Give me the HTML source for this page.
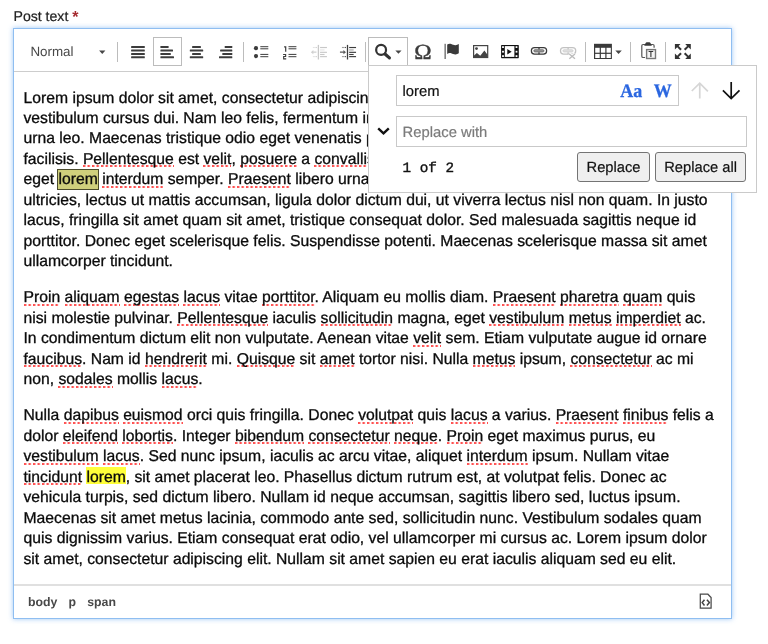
<!DOCTYPE html>
<html lang="en">
<head>
<meta charset="utf-8">
<title>Post text editor</title>
<style>
*{box-sizing:border-box;margin:0;padding:0}
html,body{width:768px;height:644px;background:#fff;overflow:hidden}
#root{position:absolute;left:0;top:0;width:768px;height:644px;will-change:transform;transform:translateZ(0)}
body{position:relative;font-family:"Liberation Sans",Arial,sans-serif;color:#111;text-rendering:geometricPrecision;-webkit-font-smoothing:antialiased}
.abs{position:absolute}
#label{left:13.500px;top:8px;font-size:14.100px;line-height:16px;color:#222;white-space:nowrap;-webkit-text-stroke:.2px #222}
#label b{font-weight:bold;font-size:16px;color:#a52a2f;-webkit-text-stroke:0;position:relative;top:.5px}
#editor{left:13px;top:28px;width:719px;height:591px;border:1px solid #8fbef1;background:#fff;box-shadow:0 0 5px 0 rgba(125,180,242,.75)}
#tbline{left:14px;top:70.800px;width:717px;height:1.200px;background:#cdcdcd}
#btline{left:14px;top:584.200px;width:717px;height:1.500px;background:#e0e0e0}
#content{z-index:0;left:23.5px;top:88.5px;font-size:15.73px;line-height:20.45px;color:#0b0b0b;white-space:nowrap;-webkit-text-stroke:0.3px #0b0b0b}
#content p{margin:0 0 15.8px 0}
.s{padding-bottom:1px;background-image:linear-gradient(to right,#ff5050 0,#ff5050 2.1px,rgba(255,80,80,0) 2.5px);background-size:4.5px 2px;background-repeat:repeat-x;background-position:0 14.6px}
.hl1,.hl2{position:relative}
.hl1::before{content:"";position:absolute;left:-1px;right:-1px;top:-2px;height:18.200px;background:#cfcf7c;border:1px solid #4b4b2c;z-index:-1}
.hl2::before{content:"";position:absolute;left:0;right:0;top:-1.900px;height:17.300px;background:#ffff3a;z-index:-1}
#path{left:28px;top:595px;font-size:12.300px;line-height:14px;font-weight:bold;color:#484848;white-space:nowrap}
#path span{margin-right:11.200px}
.sep{width:1px;height:20px;top:41.5px;background:#bcbcbc}
.ico{width:16px;height:16px}
.ico svg{display:block;width:100%;height:100%;overflow:visible}
#combo{left:30.400px;top:44px;font-size:13.400px;line-height:16px;color:#484848}
.caret{width:0;height:0;border-left:3.2px solid transparent;border-right:3.2px solid transparent;border-top:3.3px solid #484848}
#alignbox{left:153px;top:37px;width:29px;height:28.5px;border:1px solid #bcbcbc;background:#fff}
#findbtn{left:368px;top:37px;width:39.6px;height:30px;border:1px solid #bcbcbc;border-bottom:none;background:#fff}
#panel{left:368px;top:65px;width:388.6px;height:128px;border:1px solid #cacaca;background:#fff}
.inp{border:1px solid #c9c9c9;background:#fff;font-size:14.800px;line-height:18px;color:#111;white-space:nowrap;-webkit-text-stroke:.2px currentColor}
#in1{left:396.3px;top:74.6px;width:282.6px;height:31.3px;padding:7.400px 0 0 5.200px}
#in2{left:396.3px;top:116px;width:350.3px;height:30.5px;padding:7px 0 0 5.300px;color:#7b7b7b}
.serif{font-family:"Liberation Serif","Times New Roman",serif;font-weight:bold;color:#2a63db;font-size:17px;line-height:20px}
#count{left:402.6px;top:159.500px;font-family:"Liberation Mono",monospace;font-size:14.300px;line-height:18px;color:#111;white-space:pre;-webkit-text-stroke:.350px #111}
.btn{top:151.8px;height:30.4px;border:1px solid #747474;border-radius:3px;background:#efefef;font-size:14.7px;line-height:18px;color:#111;text-align:center;padding-top:6.600px;white-space:nowrap;-webkit-text-stroke:.2px #111}
</style>
</head>
<body>
<div id="root">
<div id="label" class="abs">Post text <b>*</b></div>
<div id="editor" class="abs"></div>
<div id="tbline" class="abs"></div>
<div id="btline" class="abs"></div>

<div id="content" class="abs">
<p>Lorem ipsum dolor sit amet, consectetur adipiscing elit. Etiam vel<br>vestibulum cursus dui. Nam leo felis, fermentum in mauris ut,<br>urna leo. Maecenas tristique odio eget venenatis porta. Cras<br>facilisis. <span class="s">Pellentesque</span> est <span class="s">velit</span>, <span class="s">posuere</span> a <span class="s">convallis</span> ut, tempus<br>eget <span class="hl1">lorem</span> <span class="s">interdum</span> semper. <span class="s">Praesent</span> libero urna, dictum<br>ultricies, lectus ut mattis accumsan, ligula dolor dictum dui, ut viverra lectus nisl non quam. In justo<br>lacus, fringilla sit amet quam sit amet, tristique consequat dolor. Sed malesuada sagittis neque id<br>porttitor. Donec eget scelerisque felis. Suspendisse potenti. Maecenas scelerisque massa sit amet<br>ullamcorper tincidunt.</p>
<p><span class="s">Proin</span> <span class="s">aliquam</span> <span class="s">egestas</span> <span class="s">lacus</span> vitae <span class="s">porttitor</span>. Aliquam eu mollis diam. <span class="s">Praesent</span> <span class="s">pharetra</span> <span class="s">quam</span> quis<br>nisi molestie pulvinar. <span class="s">Pellentesque</span> iaculis <span class="s">sollicitudin</span> magna, eget <span class="s">vestibulum</span> <span class="s">metus</span> <span class="s">imperdiet</span> ac.<br>In condimentum dictum elit non vulputate. Aenean vitae <span class="s">velit</span> sem. Etiam vulputate augue id ornare<br><span class="s">faucibus</span>. Nam id <span class="s">hendrerit</span> mi. <span class="s">Quisque</span> sit <span class="s">amet</span> tortor nisi. Nulla <span class="s">metus</span> ipsum, <span class="s">consectetur</span> ac mi<br>non, <span class="s">sodales</span> mollis <span class="s">lacus</span>.</p>
<p>Nulla <span class="s">dapibus</span> <span class="s">euismod</span> orci quis fringilla. Donec <span class="s">volutpat</span> quis <span class="s">lacus</span> a varius. <span class="s">Praesent</span> <span class="s">finibus</span> felis a<br>dolor <span class="s">eleifend</span> <span class="s">lobortis</span>. Integer <span class="s">bibendum</span> <span class="s">consectetur</span> <span class="s">neque</span>. <span class="s">Proin</span> eget maximus purus, eu<br><span class="s">vestibulum</span> <span class="s">lacus</span>. Sed nunc ipsum, iaculis ac arcu vitae, aliquet <span class="s">interdum</span> ipsum. Nullam vitae<br><span class="s">tincidunt</span> <span class="hl2">lorem</span>, sit amet placerat leo. Phasellus dictum rutrum est, at volutpat felis. Donec ac<br>vehicula turpis, sed dictum libero. Nullam id neque accumsan, sagittis libero sed, luctus ipsum.<br>Maecenas sit amet metus lacinia, commodo ante sed, sollicitudin nunc. Vestibulum sodales quam<br>quis dignissim varius. Etiam consequat erat odio, vel ullamcorper mi cursus ac. Lorem ipsum dolor<br>sit amet, consectetur adipiscing elit. Nullam sit amet sapien eu erat iaculis aliquam sed eu elit.</p>
</div>

<div id="path" class="abs"><span>body</span><span>p</span><span>span</span></div>

<!-- TOOLBAR -->
<div id="combo" class="abs">Normal</div>
<div class="abs sep" style="left:117px"></div>
<div id="alignbox" class="abs"></div>
<div class="abs sep" style="left:242.6px"></div>
<div class="abs sep" style="left:364.6px"></div>
<div class="abs sep" style="left:585.3px"></div>
<div class="abs sep" style="left:630.2px"></div>
<div class="abs sep" style="left:665px"></div>

<!-- FIND PANEL -->
<div id="findbtn" class="abs"></div>
<div id="panel" class="abs"></div>
<div id="in1" class="abs inp">lorem</div>
<div id="in2" class="abs inp">Replace with</div>
<div id="count" class="abs">1 of 2</div>
<div class="abs btn" style="left:577.3px;width:72.4px">Replace</div>
<div class="abs btn" style="left:654.8px;width:91.6px">Replace all</div>


<!-- ICONS -->
<svg class="abs" id="icons" style="left:0;top:0" width="768" height="200" viewBox="0 0 768 200">
<g fill="#3c3c3c">
<!-- justify block -->
<rect x="131.1" y="46" width="13.7" height="2" rx=".5"/><rect x="131.1" y="49.5" width="13.7" height="2" rx=".5"/><rect x="131.1" y="52.9" width="13.7" height="2" rx=".5"/><rect x="131.1" y="56.2" width="13.7" height="2" rx=".5"/>
<!-- justify left -->
<rect x="160.4" y="46" width="8.2" height="2" rx=".5"/><rect x="160.4" y="49.5" width="12.6" height="2" rx=".5"/><rect x="160.4" y="52.9" width="10.4" height="2" rx=".5"/><rect x="160.4" y="56.2" width="13.6" height="2" rx=".5"/>
<!-- justify center -->
<rect x="192.1" y="46" width="8.8" height="2" rx=".5"/><rect x="189.8" y="49.5" width="13.4" height="2" rx=".5"/><rect x="192.1" y="52.9" width="8.8" height="2" rx=".5"/><rect x="189.8" y="56.2" width="13.4" height="2" rx=".5"/>
<!-- justify right -->
<rect x="224.7" y="46" width="7.6" height="2" rx=".5"/><rect x="220.1" y="49.5" width="12.2" height="2" rx=".5"/><rect x="222.3" y="52.9" width="10" height="2" rx=".5"/><rect x="219" y="56.2" width="13.3" height="2" rx=".5"/>
<!-- bulleted list -->
<circle cx="256" cy="48.2" r="2.1"/><circle cx="256" cy="56.1" r="2.1"/>
<rect x="260.3" y="46.2" width="8" height="1"/><rect x="260.3" y="48.3" width="8" height="1"/><rect x="260.3" y="53.9" width="8" height="1"/><rect x="260.3" y="56.2" width="8" height="1"/>
<!-- numbered list -->
<path d="M284.1 46.3h2.2v5.4h-1.2v-4.3h-1z"/>
<path d="M283.1 54h3.1v3h-2v1.3h2v1.1h-3.1v-3.3h2v-1h-2z"/>
<rect x="288.5" y="46.2" width="7.9" height="1"/><rect x="288.5" y="48.3" width="7.9" height="1"/><rect x="288.5" y="53.9" width="7.9" height="1"/><rect x="288.5" y="56.2" width="7.9" height="1"/>
</g>
<!-- outdent (disabled) -->
<g fill="#3c3c3c" opacity=".28">
<rect x="317.75" y="44.9" width="1.3" height="14.6"/>
<rect x="320.05" y="46.95" width="6.9" height="1.15"/><rect x="320.05" y="49.25" width="4.5" height="1.35" opacity=".4"/><rect x="320.05" y="51.75" width="6.9" height="1.15"/><rect x="320.05" y="53.95" width="4.5" height="1.1"/><rect x="320.05" y="56.05" width="6.9" height="1.15"/>
<rect x="312.85" y="46.95" width="2" height="1.1" opacity=".5"/><rect x="315.55" y="46.95" width="1.2" height="1.1"/><rect x="312.85" y="56.05" width="2" height="1.1" opacity=".5"/><rect x="315.55" y="56.05" width="1.2" height="1.1"/>
<path d="M310.85 52.2l2.500-2.100v1.500h3.100v1.200h-3.100v1.500z" opacity=".85"/>
</g>
<!-- indent -->
<g fill="#3c3c3c">
<rect x="346.85" y="44.9" width="1.3" height="14.6"/>
<rect x="349.15" y="46.95" width="6.9" height="1.15"/><rect x="349.15" y="49.25" width="4.5" height="1.35" opacity=".4"/><rect x="349.15" y="51.75" width="6.9" height="1.15"/><rect x="349.15" y="53.95" width="4.5" height="1.1"/><rect x="349.15" y="56.05" width="6.9" height="1.15"/>
<rect x="341.95" y="46.95" width="2" height="1.1" opacity=".5"/><rect x="344.65" y="46.95" width="1.2" height="1.1"/><rect x="341.95" y="56.05" width="2" height="1.1" opacity=".5"/><rect x="344.65" y="56.05" width="1.2" height="1.1"/>
<path d="M345.95 52.2l-2.5-2.100v1.500h-3.500v1.200h3.500v1.500z" opacity=".85"/>
</g>
<!-- search -->
<circle cx="381.1" cy="49.9" r="4.95" fill="none" stroke="#333" stroke-width="2.2"/>
<path d="M385 54l4.400 3.900" stroke="#333" stroke-width="3.200" stroke-linecap="round" fill="none"/>
<!-- omega -->
<text transform="translate(414.200 59.200) scale(1.080 1)" font-family="Liberation Serif, serif" font-size="21.600" fill="#3c3c3c" stroke="#3c3c3c" stroke-width=".450">Ω</text>
<!-- flag / anchor -->
<rect x="444.5" y="43.8" width="1.3" height="15.2" fill="#666"/>
<path d="M447.2 44.6c1.3-1 2.6-1.2 4-.6 1.6.7 2.8 1.3 4.3 1.2 1.2-.1 2.3-.5 3.3-1.1v9.2c-1 .7-2 1.1-3.2 1.2-1.600.1-2.900-.5-4.400-1.2-1.400-.6-2.700-.400-4 .6z" fill="#3a3a3a"/>
<!-- image -->
<rect x="473.6" y="45.6" width="14.1" height="11.9" fill="#fff" stroke="#444" stroke-width="1.2"/>
<circle cx="476.5" cy="48.6" r="1.4" fill="#444"/>
<path d="M474 57.200v-1.600l2.900-2.600 3.350 2.700 4.150-5.200 3.100 4.300v2.400z" fill="#444"/>
<!-- video -->
<rect x="501.1" y="45" width="17.7" height="13.2" rx=".6" fill="#111"/>
<rect x="504.8" y="46.1" width="9.6" height="10.8" fill="#fff"/>
<path d="M507.300 49v5.400l4.400-2.700z" fill="#111"/>
<g fill="#fff"><rect x="502.100" y="46.200" width="1.800" height="1.800"/><rect x="502.100" y="50.800" width="1.800" height="1.800"/><rect x="502.100" y="55.200" width="1.800" height="1.800"/><rect x="515.600" y="46.200" width="1.800" height="1.800"/><rect x="515.600" y="50.800" width="1.800" height="1.800"/><rect x="515.600" y="55.200" width="1.800" height="1.800"/></g>
<!-- link -->
<g id="lnk">
<rect x="531.4" y="47.5" width="15.2" height="6.7" rx="3.1" fill="#fff" stroke="#3a3a3a" stroke-width="1.25"/>
<path d="M539 47.500v1.900M539 54.200v-1.900" stroke="#3a3a3a" stroke-width="1.300" fill="none"/>
<rect x="533.800" y="49.700" width="10.200" height="2.300" rx="1.150" fill="#9a9a9a" stroke="#555" stroke-width=".7"/>
</g>
<!-- unlink disabled -->
<g opacity=".3">
<rect x="560.500" y="47.500" width="15.200" height="6.700" rx="3.100" fill="#fff" stroke="#3a3a3a" stroke-width="1.250"/>
<path d="M568.100 47.500v1.900M568.100 54.200v-1.900" stroke="#3a3a3a" stroke-width="1.300" fill="none"/>
<rect x="562.900" y="49.700" width="10.200" height="2.300" rx="1.150" fill="#9a9a9a" stroke="#555" stroke-width=".7"/>
<path d="M569.300 53.900l5.700 4.900M575 53.900l-5.700 4.900" stroke="#fff" stroke-width="3" fill="none"/>
<path d="M569.300 53.900l5.700 4.900M575 53.900l-5.700 4.900" stroke="#222" stroke-width="1.300" fill="none"/>
</g>
<!-- table -->
<rect x="594" y="43.800" width="17.900" height="15.200" fill="#3a3a3a"/>
<g fill="#fff"><rect x="595.200" y="47.800" width="4.500" height="4.900"/><rect x="600.900" y="47.800" width="4.400" height="4.900"/><rect x="606.500" y="47.800" width="4.300" height="4.900"/><rect x="595.200" y="53.900" width="4.500" height="4.100"/><rect x="600.900" y="53.900" width="4.400" height="4.100"/><rect x="606.500" y="53.900" width="4.300" height="4.100"/></g>
<!-- paste text -->
<path d="M654.100 47.700v-1.900q0-1.300-1.300-1.300h-9.700q-1.300 0-1.300 1.300v10.400q0 1.300 1.300 1.300h2" fill="none" stroke="#555" stroke-width="1.200"/>
<path d="M644.2 45.700l1.300-2.500q.4-.9 1.300-.9h2.500q.9 0 1.300.9l1.300 2.500z" fill="#3a3a3a"/>
<rect x="646.600" y="49.600" width="8.900" height="8.900" fill="#f4f4f4" stroke="#777" stroke-width="1.400"/>
<path d="M648.600 51.100h4.600v1h-1.750v4.800h-1.100v-4.800h-1.750z" fill="#333"/>
<!-- maximize -->
<g fill="#333" stroke="none">
<path d="M674.9 44h5.6l-1.9 1.9 3.2 3.1-1.5 1.5-3.1-3.2-2.3 2.3z"/>
<path d="M690.8 44v5.6l-2.3-2.3-3.1 3.2-1.5-1.5 3.2-3.1-1.9-1.9z"/>
<path d="M674.9 59v-5.6l2.3 2.3 3.1-3.1 1.5 1.5-3.2 3 1.9 1.9z"/>
<path d="M690.8 59h-5.6l1.900-1.900-3.200-3 1.500-1.500 3.100 3.100 2.300-2.300z"/>
</g>
<!-- find arrows -->
<path d="M699.750 98.600v-15.200M691.800 91l7.950-7.900 8.150 8.200" fill="none" stroke="#d6d6d6" stroke-width="1.700"/>
<path d="M731.200 82v16.400M722.900 90.300l8.300 8.300 8.300-8.300" fill="none" stroke="#111" stroke-width="1.700"/>
<g font-family="Liberation Serif, serif" font-weight="bold" font-size="18" fill="#2a66e0" stroke="#2a66e0" stroke-width=".25">
<text transform="translate(620.300 96.600) scale(1 1.060)">Aa</text>
<text transform="translate(653.800 96.600) scale(1 1.060)">W</text>
</g>
<path d="M99.100 50.500h6.300l-3.150 3.400zM395.350 50.500h6.200l-3.100 3.300zM615.300 50.500h6.500l-3.250 3.400z" fill="#474747"/>
<!-- chevron -->
<path d="M378.200 128.400l5.300 5 5.300-5" fill="none" stroke="#111" stroke-width="2.400"/>
</svg>

<svg class="abs" style="left:690px;top:588px" width="30" height="26" viewBox="690 588 30 26">
<path d="M700.300 594.200h7.600l3.200 3.300v10.600h-10.800z" fill="#fff" stroke="#4a4a4a" stroke-width="1.250" stroke-linejoin="miter"/>
<path d="M704.500 599.700l-2.300 2.900 2.300 2.900M706.900 599.700l2.500 2.900-2.500 2.900" fill="none" stroke="#444" stroke-width="1.500"/>
</svg>
</div>
</body>
</html>
